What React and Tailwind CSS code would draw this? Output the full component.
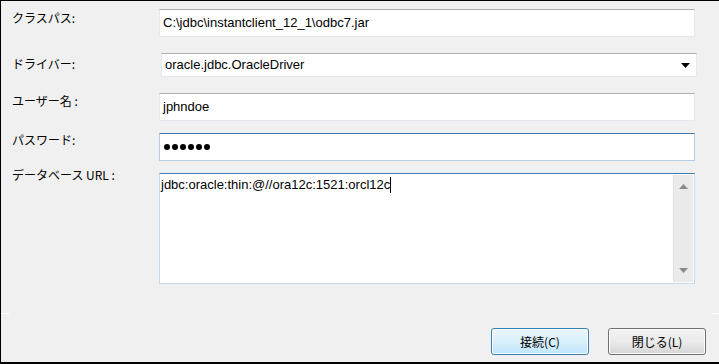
import React from "react";

const jp = { fontFamily: '"Noto Sans CJK JP", "Noto Sans", sans-serif' };
const lat = { fontFamily: '"Liberation Sans", "Noto Sans CJK JP", sans-serif' };

function Label({ children, className = "" }) {
  return (
    <div
      className={"w-[147px] shrink-0 text-[12px] leading-[16px] text-black " + className}
      style={jp}
    >
      {children}
    </div>
  );
}

function TextBox({ children, focused = false, className = "" }) {
  const border = focused
    ? "border border-[#b5cfe7] border-t-[#3d7bad]"
    : "border border-[#e3e9ef] border-t-[#abadb3]";
  return (
    <div
      className={
        "w-[536px] h-[28px] bg-white flex items-center pl-[3px] text-[13px] text-black " +
        border +
        " " +
        className
      }
      style={lat}
    >
      {children}
    </div>
  );
}

export default function App() {
  return (
    <div className="w-[719px] h-[364px] bg-[#f0f0f0] border-l border-t border-b-2 border-black relative box-border overflow-hidden">
      <div className="flex flex-col pl-[11px]">
        {/* Row 1 */}
        <div className="flex items-start mt-[8px]">
          <Label className="mt-[1px]">クラスパス:</Label>
          <TextBox>C:\jdbc\instantclient_12_1\odbc7.jar</TextBox>
        </div>
        {/* Row 2 */}
        <div className="flex items-start mt-[16px]">
          <Label className="mt-[3px]">ドライバー:</Label>
          <div
            className="ml-[2px] w-[536px] h-[24px] bg-white border border-[#e3e9ef] border-t-[#abadb3] flex items-center justify-between pl-[3px] pr-[6px] text-[13px] text-black"
            style={lat}
          >
            <span>oracle.jdbc.OracleDriver</span>
            <svg width="9" height="5" viewBox="0 0 9 5">
              <path d="M0 0 H9 L4.5 5 Z" fill="#000" />
            </svg>
          </div>
        </div>
        {/* Row 3 */}
        <div className="flex items-start mt-[16px]">
          <Label className="mt-[0px]">ユーザー名 :</Label>
          <TextBox>jphndoe</TextBox>
        </div>
        {/* Row 4 */}
        <div className="flex items-start mt-[12px]">
          <Label className="-mt-[1px]">パスワード:</Label>
          <TextBox focused>
            <div className="flex items-center gap-[2px] pl-[1px]" aria-label="●●●●●●">
              <span className="w-[6px] h-[6px] rounded-full bg-black" />
              <span className="w-[6px] h-[6px] rounded-full bg-black" />
              <span className="w-[6px] h-[6px] rounded-full bg-black" />
              <span className="w-[6px] h-[6px] rounded-full bg-black" />
              <span className="w-[6px] h-[6px] rounded-full bg-black" />
              <span className="w-[6px] h-[6px] rounded-full bg-black" />
            </div>
          </TextBox>
        </div>
        {/* Row 5 */}
        <div className="flex items-start mt-[12px]">
          <Label className="-mt-[6px]">データベース URL :</Label>
          <div className="w-[536px] h-[111px] bg-white border border-[#c5daed] border-t-[#3c7fb1] flex">
            <div className="flex-1 pl-[1px] pt-[3px] text-[13px] leading-[16px] text-black flex items-start" style={lat}>
              <span>jdbc:oracle:thin:@//ora12c:1521:orcl12c</span>
              <span className="inline-block w-px h-[16px] bg-black" />
            </div>
            <div className="w-[20px] mr-[1px] my-px bg-[#eaeaea] border-l border-[#e0e0e0] flex flex-col items-center justify-between py-[9px]">
              <svg width="9" height="5" viewBox="0 0 9 5">
                <path d="M4.5 0 L9 5 H0 Z" fill="#8a8a8a" />
              </svg>
              <svg width="9" height="5" viewBox="0 0 9 5">
                <path d="M0 0 H9 L4.5 5 Z" fill="#8a8a8a" />
              </svg>
            </div>
          </div>
        </div>
      </div>

      {/* faint separator bits */}
      <div className="absolute left-0 top-[312px] w-[8px] h-px bg-[#ffffff]" />
      <div className="absolute right-0 top-[312px] w-[7px] h-px bg-[#ffffff]" />

      {/* Buttons */}
      <div className="flex justify-end gap-[19px] pr-[13px] mt-[44px]">
        <button
          className="w-[98px] h-[27px] rounded-[3px] border border-[#3c7fb1] bg-gradient-to-b from-[#eaf6fd] via-[#d9f0fc] to-[#bee6fd] shadow-[inset_0_0_0_1px_#ffffff] text-[12px] text-black flex items-center justify-center"
          style={jp}
        >
          接続(C)
        </button>
        <button
          className="w-[98px] h-[27px] rounded-[3px] border border-[#707070] bg-gradient-to-b from-[#f2f2f2] via-[#ebebeb] to-[#d5d5d5] shadow-[inset_0_0_0_1px_#fcfcfc] text-[12px] text-black flex items-center justify-center"
          style={jp}
        >
          閉じる(L)
        </button>
      </div>
    </div>
  );
}
